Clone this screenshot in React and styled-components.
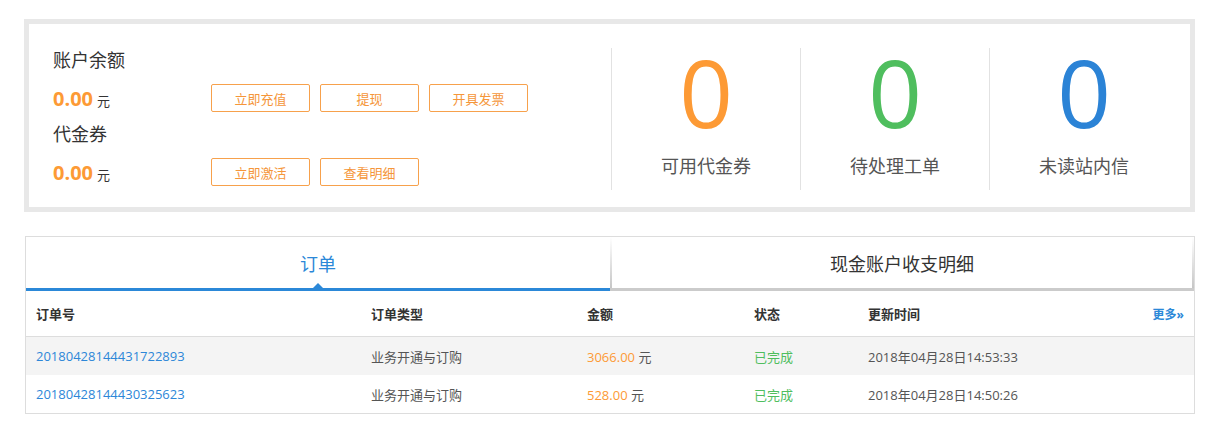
import React, { useState } from 'react';
import styled, { createGlobalStyle } from 'styled-components';

const GlobalStyle = createGlobalStyle`
  body {
    margin: 0;
    background: #fff;
    font-family: "Open Sans", "Noto Sans CJK SC", sans-serif;
    color: #333;
  }
`;

const Page = styled.div`
  padding: 19px 0 0 24px;
`;

const Summary = styled.div`
  box-sizing: border-box;
  width: 1171px;
  height: 193px;
  border: 5px solid #e8e8e8;
  display: flex;
  padding: 24px 0 0 0;
`;

const Balance = styled.div`
  width: 558px;
  padding-left: 24px;
`;

const Title = styled.div`
  font-size: 18px;
  line-height: 24px;
  color: #333;
  margin-top: ${({ first }) => (first ? '0' : '10px')};
`;

const AmountRow = styled.div`
  display: flex;
  align-items: center;
  margin-top: 12px;
  height: 28px;
`;

const Amount = styled.div`
  width: 158px;
  font-size: 13px;
  color: #333;

  b {
    font-size: 20px;
    font-weight: 700;
    color: #fd9a35;
    margin-right: 4px;
  }
`;

const Actions = styled.div`
  display: flex;
  gap: 10px;
`;

const OutlineButton = styled.button`
  box-sizing: border-box;
  width: 99px;
  height: 28px;
  background: #fff;
  border: 1px solid #f7a14c;
  border-radius: 2px;
  color: #f5963a;
  font-family: inherit;
  font-size: 13px;
  cursor: pointer;
  padding: 0;
`;

const Stats = styled.div`
  display: flex;
`;

const Stat = styled.div`
  box-sizing: border-box;
  width: 189px;
  height: 142px;
  border-left: 1px solid #e2e2e2;
  display: flex;
  flex-direction: column;
  align-items: center;
`;

const StatNumber = styled.div`
  font-size: 94px;
  line-height: 88px;
  color: ${({ color }) => color};
`;

const StatLabel = styled.div`
  margin-top: 18px;
  font-size: 18px;
  line-height: 24px;
  color: #555;
`;

const Panel = styled.div`
  box-sizing: border-box;
  width: 1170px;
  margin: 24px 0 0 1px;
  border: 1px solid #ddd;
`;

const Tabs = styled.div`
  display: flex;
`;

const Tab = styled.div`
  position: relative;
  flex: 1;
  box-sizing: border-box;
  height: 54px;
  display: flex;
  align-items: center;
  justify-content: center;
  font-size: 18px;
  cursor: pointer;
  color: ${({ active }) => (active ? '#2b88d8' : '#333')};
  border-bottom: 3px solid ${({ active }) => (active ? '#2b88d8' : '#cbcbcb')};
  background: ${({ active }) =>
    active
      ? '#fff'
      : 'linear-gradient(#fff, #c6c6c6) left / 2px 100% no-repeat, linear-gradient(#fff, #c6c6c6) right / 2px 100% no-repeat, #fff'};

  &::after {
    content: '';
    display: ${({ active }) => (active ? 'block' : 'none')};
    position: absolute;
    left: 50%;
    bottom: 0;
    margin-left: -5px;
    border: 5px solid transparent;
    border-top: 0;
    border-bottom-color: #2b88d8;
  }
`;

const Row = styled.div`
  display: grid;
  grid-template-columns: 335px 216px 167px 114px 1fr auto;
  align-items: center;
  padding: 0 10px;
  height: ${({ head }) => (head ? '45px' : '38px')};
  font-size: 13px;
  font-weight: ${({ head }) => (head ? 700 : 400)};
  color: ${({ head }) => (head ? '#333' : '#555')};
  background: ${({ shaded }) => (shaded ? '#f4f4f4' : '#fff')};
  border-bottom: ${({ head }) => (head ? '1px solid #ddd' : 'none')};
`;

const OrderNo = styled.span`
  color: #2d87d8;
`;

const Money = styled.span`
  em {
    font-style: normal;
    color: #fd9a35;
  }
`;

const Done = styled.span`
  color: #4fbe5e;
`;

const More = styled.a`
  color: #2b88d8;
  font-size: 12px;
  font-weight: 700;
  text-decoration: none;
`;

const orders = [
  { no: '20180428144431722893', type: '业务开通与订购', amount: '3066.00', time: '2018年04月28日14:53:33' },
  { no: '20180428144430325623', type: '业务开通与订购', amount: '528.00', time: '2018年04月28日14:50:26' },
];

const stats = [
  { value: 0, label: '可用代金券', color: '#fd9a35' },
  { value: 0, label: '待处理工单', color: '#4fbe5e' },
  { value: 0, label: '未读站内信', color: '#2b83d6' },
];

const App = () => {
  const [tab, setTab] = useState(0);

  return (
    <Page>
      <GlobalStyle />
      <Summary>
        <Balance>
          <Title first>账户余额</Title>
          <AmountRow>
            <Amount><b>0.00</b>元</Amount>
            <Actions>
              <OutlineButton>立即充值</OutlineButton>
              <OutlineButton>提现</OutlineButton>
              <OutlineButton>开具发票</OutlineButton>
            </Actions>
          </AmountRow>
          <Title>代金券</Title>
          <AmountRow>
            <Amount><b>0.00</b>元</Amount>
            <Actions>
              <OutlineButton>立即激活</OutlineButton>
              <OutlineButton>查看明细</OutlineButton>
            </Actions>
          </AmountRow>
        </Balance>
        <Stats>
          {stats.map((s) => (
            <Stat key={s.label}>
              <StatNumber color={s.color}>{s.value}</StatNumber>
              <StatLabel>{s.label}</StatLabel>
            </Stat>
          ))}
        </Stats>
      </Summary>

      <Panel>
        <Tabs>
          <Tab active={tab === 0} onClick={() => setTab(0)}>订单</Tab>
          <Tab active={tab === 1} onClick={() => setTab(1)}>现金账户收支明细</Tab>
        </Tabs>
        <Row head>
          <span>订单号</span>
          <span>订单类型</span>
          <span>金额</span>
          <span>状态</span>
          <span>更新时间</span>
          <More href="#">更多»</More>
        </Row>
        {orders.map((o, i) => (
          <Row key={o.no} shaded={i % 2 === 0}>
            <OrderNo>{o.no}</OrderNo>
            <span>{o.type}</span>
            <Money><em>{o.amount}</em> 元</Money>
            <Done>已完成</Done>
            <span>{o.time}</span>
            <span />
          </Row>
        ))}
      </Panel>
    </Page>
  );
};

export default App;
